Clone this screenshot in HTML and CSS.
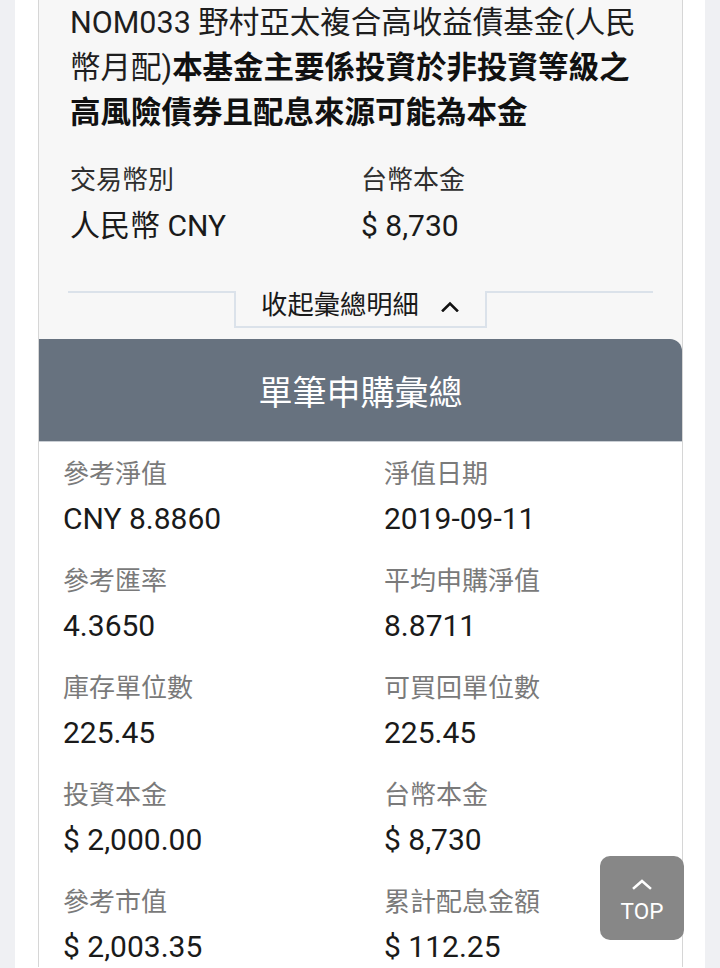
FILE: index.html
```html
<!DOCTYPE html>
<html lang="zh-Hant">
<head>
<meta charset="utf-8">
<title>單筆申購彙總</title>
<link rel="stylesheet" href="styles.css">
</head>
<body>
<div class="page">
  <div class="card">
    <div class="summary">
      <h1 class="fund-title">NOM033 野村亞太複合高收益債基金(人民幣月配)<strong>本基金主要係投資於非投資等級之高風險債券且配息來源可能為本金</strong></h1>
      <div class="pair-grid top-grid">
        <div class="cell">
          <div class="top-label">交易幣別</div>
          <div class="top-value">人民幣 CNY</div>
        </div>
        <div class="cell">
          <div class="top-label">台幣本金</div>
          <div class="top-value">$ 8,730</div>
        </div>
      </div>
      <div class="toggle-row">
        <span class="toggle-line"></span>
        <button class="toggle-tab" type="button">收起彙總明細
          <svg class="chev" width="18" height="11" viewBox="0 0 18 11"><path d="M2 9.5 L9 2.5 L16 9.5" fill="none" stroke="#111" stroke-width="2.6" stroke-linecap="square"/></svg>
        </button>
        <span class="toggle-line"></span>
      </div>
    </div>
    <div class="detail-head">單筆申購彙總</div>
    <div class="details">
      <div class="pair-grid detail-grid">
        <div class="cell"><div class="d-label">參考淨值</div><div class="d-value">CNY 8.8860</div></div>
        <div class="cell"><div class="d-label">淨值日期</div><div class="d-value">2019-09-11</div></div>
        <div class="cell"><div class="d-label">參考匯率</div><div class="d-value">4.3650</div></div>
        <div class="cell"><div class="d-label">平均申購淨值</div><div class="d-value">8.8711</div></div>
        <div class="cell"><div class="d-label">庫存單位數</div><div class="d-value">225.45</div></div>
        <div class="cell"><div class="d-label">可買回單位數</div><div class="d-value">225.45</div></div>
        <div class="cell"><div class="d-label">投資本金</div><div class="d-value">$ 2,000.00</div></div>
        <div class="cell"><div class="d-label">台幣本金</div><div class="d-value">$ 8,730</div></div>
        <div class="cell"><div class="d-label">參考市值</div><div class="d-value">$ 2,003.35</div></div>
        <div class="cell"><div class="d-label">累計配息金額</div><div class="d-value">$ 112.25</div></div>
      </div>
    </div>
  </div>
</div>
<a class="top-btn" href="#">
  <svg width="22" height="12" viewBox="0 0 22 12"><path d="M3 10 L11 3 L19 10" fill="none" stroke="#fff" stroke-width="2.6" stroke-linecap="square"/></svg>
  <span>TOP</span>
</a>
</body>
</html>
```

FILE: styles.css
```css
* { box-sizing: border-box; }
html, body {
  margin: 0;
  padding: 0;
  background: #eff0f3;
  font-family: Roboto, "Noto Sans CJK TC", "Noto Sans", sans-serif;
  color: #1c1c1c;
}
.page {
  margin: 0 15px;
  background: #ffffff;
  padding: 0 22px 0 23px;
  min-height: 968px;
}
.card {
  border-left: 1px solid #d6d6d6;
  border-right: 1px solid #d6d6d6;
  background: #f7f7f7;
}
.summary {
  padding: 0 30px 11px 31px;
}
.fund-title {
  margin: 0;
  padding-right: 4px;
  font-size: 30.5px;
  line-height: 45px;
  font-weight: 400;
  color: #1e1e1e;
}
.fund-title strong { font-weight: 700; color: #111; }
.pair-grid {
  display: grid;
}
.top-grid {
  grid-template-columns: 291px 1fr;
  margin-top: 27px;
}
.top-label {
  font-size: 26px;
  line-height: 36px;
  color: #2e2e2e;
}
.top-value {
  margin-top: 8px;
  font-size: 30px;
  line-height: 40px;
  color: #1a1a1a;
}
.toggle-row {
  display: flex;
  align-items: flex-start;
  margin: 45px -1px 0 -2px;
}
.toggle-line {
  flex: 1;
  border-top: 2px solid #dbe2ea;
}
.toggle-tab {
  display: flex;
  align-items: center;
  gap: 22px;
  height: 37px;
  padding: 0 26px 8px 25px;
  border: 2px solid #dbe2ea;
  border-top: none;
  background: transparent;
  font-family: inherit;
  font-size: 26.3px;
  line-height: 26px;
  color: #1a1a1a;
  cursor: pointer;
}
.chev { margin-top: 4px; }
.detail-head {
  background: #67727f;
  color: #ffffff;
  height: 102px;
  display: flex;
  align-items: center;
  justify-content: center;
  font-size: 34px;
  border-top-right-radius: 12px;
}
.details {
  background: #ffffff;
  border-top: 1px solid #c9ced4;
  padding: 14px 20px 0 24px;
}
.detail-grid {
  grid-template-columns: 321px 1fr;
  row-gap: 24px;
}
.d-label {
  font-size: 26px;
  line-height: 36px;
  color: #7a7a7a;
}
.d-value {
  margin-top: 7px;
  font-size: 30px;
  line-height: 40px;
  color: #1a1a1a;
}
.top-btn {
  position: fixed;
  left: 600px;
  top: 856px;
  width: 84px;
  height: 84px;
  border-radius: 10px;
  background: #878787;
  color: #ffffff;
  text-decoration: none;
  display: flex;
  flex-direction: column;
  align-items: center;
  justify-content: center;
  gap: 9px;
  padding-top: 4px;
  font-size: 22.5px;
  line-height: 24px;
}
.top-btn svg { display: block; }
```
